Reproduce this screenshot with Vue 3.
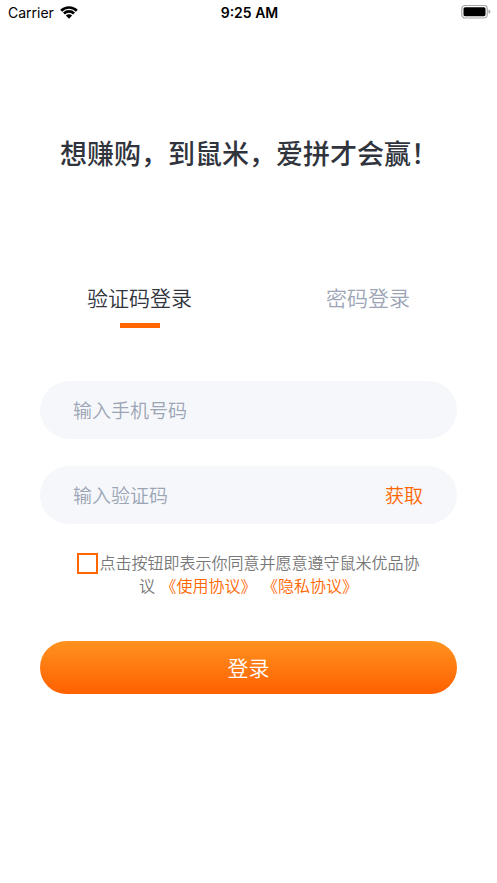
<script setup>
import { ref } from 'vue'

const tab = ref('code')
const phone = ref('')
const code = ref('')
const agreed = ref(false)
</script>

<template>
  <div class="screen">
    <header class="status">
      <div class="carrier">
        <span>Carrier</span>
        <svg class="wifi" viewBox="0 0 18 13" aria-hidden="true">
          <path d="M0.2 3.8A12.4 12.4 0 0 1 17.8 3.8L15.9 5.7A9.8 9.8 0 0 0 2.1 5.7Z" />
          <path d="M3 6.6A8.5 8.5 0 0 1 15 6.6L13.1 8.5A5.8 5.8 0 0 0 4.9 8.5Z" />
          <path d="M5.9 9.5A4.4 4.4 0 0 1 12.1 9.5L9 12.7Z" />
        </svg>
      </div>
      <time class="time">9:25 AM</time>
      <svg class="battery" viewBox="0 0 30 14" aria-hidden="true">
        <rect class="shell" x="0.75" y="0.5" width="25.5" height="12.5" rx="3.5" />
        <rect x="2.5" y="2.2" width="22" height="9" rx="1.6" />
        <path class="tip" d="M27.5 4.6Q29.5 5.2 29.5 6.7T27.5 8.8Z" />
      </svg>
    </header>

    <main class="content">
      <h1 class="title">想赚购，到鼠米，爱拼才会赢！</h1>

      <nav class="tabs">
        <button type="button" class="tab" :class="{ active: tab === 'code' }" @click="tab = 'code'">验证码登录</button>
        <button type="button" class="tab" :class="{ active: tab === 'password' }" @click="tab = 'password'">密码登录</button>
      </nav>

      <form class="form" @submit.prevent>
        <div class="field">
          <input v-model="phone" class="input" type="tel" placeholder="输入手机号码" aria-label="输入手机号码" />
        </div>
        <div class="field">
          <input v-model="code" class="input" type="text" placeholder="输入验证码" aria-label="输入验证码" />
          <button type="button" class="fetch">获取</button>
        </div>
        <p class="terms">
          <input id="agree" v-model="agreed" class="check" type="checkbox" /><label for="agree">点击按钮即表示你同意并愿意遵守鼠米优品协议</label>{{ ' ' }}<a href="#terms">《使用协议》</a>{{ ' ' }}<a href="#privacy">《隐私协议》</a>
        </p>
        <button type="submit" class="submit">登录</button>
      </form>
    </main>
  </div>
</template>

<style>
body {
  background: #fff;
}
</style>

<style scoped>
.screen {
  font-family: "Noto Sans CJK SC", sans-serif;
  font-weight: 350;
  color: #30343d;
  text-spacing-trim: space-all;
}
.status {
  display: grid;
  grid-template-columns: 1fr auto 1fr;
  align-items: center;
  height: 24px;
  padding: 0 6px 0 8px;
  font-family: Inter, sans-serif;
  font-size: 14px;
  font-weight: 400;
  color: #000;
}
.carrier {
  display: flex;
  align-items: center;
  gap: 6px;
}
.wifi {
  width: 18px;
  height: 13px;
}
.time {
  font-weight: 600;
}
.battery {
  width: 30px;
  height: 14px;
  justify-self: end;
}
.shell {
  fill: none;
  stroke: #a6a6a6;
  stroke-width: 1.2;
}
.tip {
  fill: #a6a6a6;
}
.content {
  padding: 109px 40px 40px;
}
.title {
  margin: 0;
  padding-left: 20px;
  font-size: 27px;
  line-height: 40px;
  font-weight: 500;
  white-space: nowrap;
}
.tabs {
  display: flex;
  justify-content: space-between;
  margin-top: 106px;
  padding: 0 47px;
}
button {
  padding: 0;
  border: 0;
  background: none;
  font-family: inherit;
  font-weight: inherit;
  cursor: pointer;
}
.tab {
  display: flex;
  flex-direction: column;
  align-items: center;
  gap: 8px;
  font-size: 21px;
  line-height: 36px;
  color: #9ca5b5;
}
.tab::after {
  content: "";
  width: 40px;
  height: 5px;
}
.tab.active {
  color: #30343d;
}
.tab.active::after {
  background: #ff6600;
}
.form {
  margin-top: 53px;
}
.field {
  display: flex;
  align-items: center;
  height: 58px;
  margin-bottom: 27px;
  padding: 0 34px 0 33px;
  border-radius: 29px;
  background: #f5f7fb;
}
.input {
  flex: 1;
  min-width: 0;
  padding: 0 0 2px;
  border: 0;
  outline: 0;
  background: none;
  font-family: inherit;
  font-size: 19px;
  font-weight: inherit;
  color: #30343d;
}
.input::placeholder {
  color: #9ca5b5;
  opacity: 1;
}
.fetch {
  padding-bottom: 2px;
  font-size: 19px;
  color: #ff6600;
}
.terms {
  margin: 0;
  padding: 0 32px;
  font-size: 16px;
  line-height: 23px;
  text-align: center;
  color: #777;
}
.check {
  appearance: none;
  width: 21px;
  height: 21px;
  margin: 0 1px 0 0;
  border: 2px solid #ff6600;
  vertical-align: -5px;
}
.check:checked {
  background: #ff6600;
}
.terms a {
  display: inline-block;
  margin-left: 2px;
  color: #ff6600;
  text-decoration: none;
}
.submit {
  width: 100%;
  height: 53px;
  margin-top: 44px;
  padding-bottom: 2px;
  border-radius: 27px;
  background: linear-gradient(#ff921f, #ff6000);
  font-size: 21px;
  color: #fff;
}
</style>
